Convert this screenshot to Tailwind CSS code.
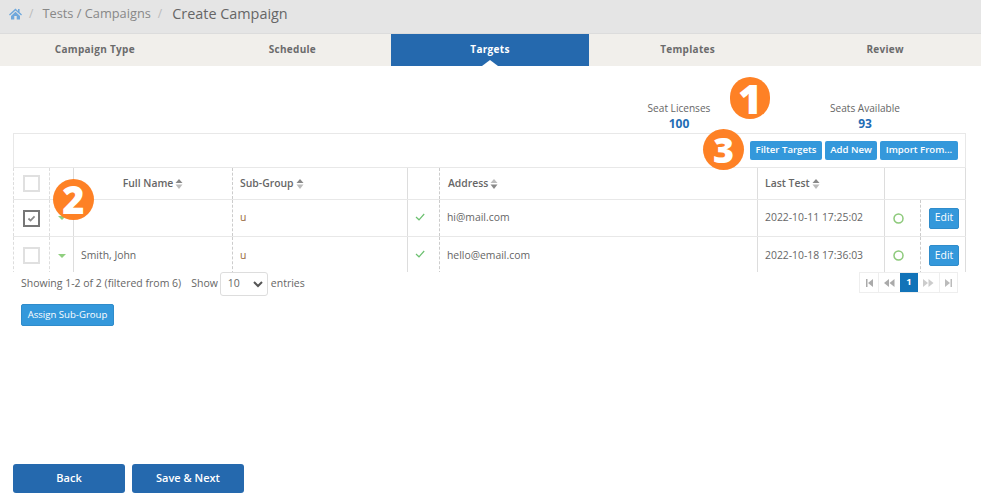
<!DOCTYPE html>
<html>
<head>
<meta charset="utf-8">
<script src="https://cdn.jsdelivr.net/npm/@tailwindcss/browser@4"></script>
</head>
<body class="bg-white">
<div class="relative w-[981px] h-[502px] overflow-hidden font-['Open_Sans',sans-serif] text-[#666]">
  <!-- breadcrumb -->
  <div class="h-[34px] bg-[#e5e5e5] border-b border-[#dcdcdc] flex items-center pl-[9px] pb-[6px]">
    <svg class="w-[13px] h-[12px]" viewBox="0 0 13 12"><path fill="#6fa8dc" d="M6.5 0.5 0 6.5l.9 1L6.500 2.500l5.600 5 .9-1-2.400-2.200V1h-1.600v1.900L6.500.5ZM2 8v3.500h3.300V8h2.400v3.500H11V8L6.500 3.800 2 8Z"/></svg>
    <span class="ml-[7px] text-[12px] text-[#bbb]">/</span>
    <span class="ml-[9px] text-[12.8px] text-[#888]">Tests / Campaigns</span>
    <span class="ml-[7px] text-[12px] text-[#bbb]">/</span>
    <span class="ml-[10px] text-[14.4px] text-[#666]">Create Campaign</span>
  </div>
  <!-- tabs -->
  <div class="grid grid-cols-5 w-[988px] -ml-[4px] h-[32px] bg-[#f1efeb] text-[10px] font-bold tracking-[0.3px] text-[#6b6b6b]">
    <div class="flex items-center justify-center pb-[1px]">Campaign Type</div>
    <div class="flex items-center justify-center pb-[1px]">Schedule</div>
    <div class="relative flex items-center justify-center pb-[1px] bg-[#2569ae] text-white">Targets
      <span class="absolute bottom-0 left-1/2 -ml-[8px] w-0 h-0 border-x-[8px] border-x-transparent border-b-[6px] border-b-white"></span>
    </div>
    <div class="flex items-center justify-center pb-[1px]">Templates</div>
    <div class="flex items-center justify-center pb-[1px]">Review</div>
  </div>
  <!-- seats -->
  <div class="h-[67px] relative flex justify-end items-end text-center">
    <div class="w-[100px] mr-[86px]">
      <div class="text-[10.1px] leading-[14px] text-[#666]">Seat Licenses</div>
      <div class="text-[12px] leading-[18px] font-bold text-[#1f6db5]">100</div>
    </div>
    <div class="w-[100px] mr-[66px]">
      <div class="text-[10.1px] leading-[14px] text-[#666]">Seats Available</div>
      <div class="text-[12px] leading-[18px] font-bold text-[#1f6db5]">93</div>
    </div>
  </div>
  <!-- table -->
  <div class="ml-[13px] w-[953px] h-[139px] overflow-hidden text-[10.4px] text-[#666]">
    <div class="h-[35px] border border-[#e8e8e8] flex items-center justify-end gap-[3px] pr-[7px]">
      <button class="w-[72px] h-[19px] rounded-[2px] bg-[#3498db] text-white text-[9.6px] font-semibold">Filter Targets</button>
      <button class="w-[52px] h-[19px] rounded-[2px] bg-[#3498db] text-white text-[9.6px] font-semibold">Add New</button>
      <button class="w-[78px] h-[19px] rounded-[2px] bg-[#3498db] text-white text-[9.6px] font-semibold">Import From...</button>
    </div>
    <!-- header -->
    <div class="grid grid-cols-[37px_24px_159px_175px_32px_318px_127px_36px_45px] h-[32px] border-b border-[#e8e8e8] font-semibold">
      <div class="border-l border-[#ddd] border-r border-r-[#ddd] border-dashed flex items-center justify-center">
        <span class="w-[17px] h-[17px] border-2 border-[#e0e0e0]"></span>
      </div>
      <div class="border-r border-[#ddd]"></div>
      <div class="border-r border-dashed border-[#ccc] flex items-center justify-center gap-[2px] pt-[1px]">Full Name
        <svg class="w-[8px] h-[10px]" viewBox="0 0 7 10"><path fill="#888" d="M3.500 0 7 4H0Z"/><path fill="#bbb" d="M3.500 10 7 5.500H0Z"/></svg>
      </div>
      <div class="border-r border-[#ddd] flex items-center pl-[7px] gap-[2px] pt-[1px]">Sub-Group
        <svg class="w-[8px] h-[10px]" viewBox="0 0 7 10"><path fill="#888" d="M3.500 0 7 4H0Z"/><path fill="#bbb" d="M3.500 10 7 5.500H0Z"/></svg>
      </div>
      <div class="border-r border-dashed border-[#ccc]"></div>
      <div class="border-r border-[#ddd] flex items-center pl-[8px] gap-[2px] pt-[1px]">Address
        <svg class="w-[8px] h-[10px]" viewBox="0 0 7 10"><path fill="#bbb" d="M3.500 0 7 4H0Z"/><path fill="#888" d="M3.500 10 7 5.500H0Z"/></svg>
      </div>
      <div class="border-r border-[#ddd] flex items-center pl-[7px] gap-[2px] pt-[1px]">Last Test
        <svg class="w-[8px] h-[10px]" viewBox="0 0 7 10"><path fill="#888" d="M3.500 0 7 4H0Z"/><path fill="#bbb" d="M3.500 10 7 5.500H0Z"/></svg>
      </div>
      <div></div>
      <div class="border-r border-[#ddd]"></div>
    </div>
    <!-- row 1 -->
    <div class="grid grid-cols-[37px_24px_159px_175px_32px_318px_127px_36px_45px] h-[37px] border-b border-[#e8e8e8]">
      <div class="border-l border-[#ddd] border-r border-r-[#ddd] border-dashed flex items-center justify-center">
        <span class="w-[17px] h-[17px] border-2 border-[#777] flex items-center justify-center">
          <svg class="w-[9px] h-[7px]" viewBox="0 0 9 8"><path fill="none" stroke="#888" stroke-width="2" d="M1 4l2.400 2.300L8 1.500"/></svg>
        </span>
      </div>
      <div class="border-r border-[#ddd] flex items-center justify-center">
        <span class="w-0 h-0 border-x-[4px] border-x-transparent border-t-[4px] border-t-[#8fcf7f]"></span>
      </div>
      <div class="border-r border-dashed border-[#ccc]"></div>
      <div class="border-r border-[#ddd] flex items-center pl-[7px] text-[#96683a]">u</div>
      <div class="border-r border-dashed border-[#ccc] flex items-center pl-[7px] pb-[3px]">
        <svg class="w-[10px] h-[8px]" viewBox="0 0 10 8"><path fill="none" stroke="#6cc070" stroke-width="1.200" d="M1 4l3 2.800L9.200 1"/></svg>
      </div>
      <div class="border-r border-[#ddd] flex items-center pl-[7px]">hi@mail.com</div>
      <div class="border-r border-[#ddd] flex items-center pl-[7px]">2022-10-11 17:25:02</div>
      <div class="border-r border-dashed border-[#ccc] flex items-center pl-[8px]">
        <svg class="w-[11px] h-[11px]" viewBox="0 0 11 11"><circle cx="5.500" cy="5.500" r="4.500" fill="none" stroke="#8cc97a" stroke-width="1.500"/></svg>
      </div>
      <div class="border-r border-[#ddd] flex items-center pl-[8px]">
        <button class="w-[30px] h-[21px] rounded-[2px] bg-[#3498db] border border-[#2f8ccb] text-white text-[10.4px]">Edit</button>
      </div>
    </div>
    <!-- row 2 -->
    <div class="grid grid-cols-[37px_24px_159px_175px_32px_318px_127px_36px_45px] h-[37px]">
      <div class="border-l border-[#ddd] border-r border-r-[#ddd] border-dashed flex items-center justify-center">
        <span class="w-[17px] h-[17px] border-2 border-[#e0e0e0]"></span>
      </div>
      <div class="border-r border-[#ddd] flex items-center justify-center">
        <span class="w-0 h-0 border-x-[4px] border-x-transparent border-t-[4px] border-t-[#8fcf7f]"></span>
      </div>
      <div class="border-r border-dashed border-[#ccc] flex items-center pl-[7px]">Smith, John</div>
      <div class="border-r border-[#ddd] flex items-center pl-[7px] text-[#96683a]">u</div>
      <div class="border-r border-dashed border-[#ccc] flex items-center pl-[7px] pb-[3px]">
        <svg class="w-[10px] h-[8px]" viewBox="0 0 10 8"><path fill="none" stroke="#6cc070" stroke-width="1.200" d="M1 4l3 2.800L9.200 1"/></svg>
      </div>
      <div class="border-r border-[#ddd] flex items-center pl-[7px]">hello@email.com</div>
      <div class="border-r border-[#ddd] flex items-center pl-[7px]">2022-10-18 17:36:03</div>
      <div class="border-r border-dashed border-[#ccc] flex items-center pl-[8px]">
        <svg class="w-[11px] h-[11px]" viewBox="0 0 11 11"><circle cx="5.500" cy="5.500" r="4.500" fill="none" stroke="#8cc97a" stroke-width="1.500"/></svg>
      </div>
      <div class="border-r border-[#ddd] flex items-center pl-[8px]">
        <button class="w-[30px] h-[21px] rounded-[2px] bg-[#3498db] border border-[#2f8ccb] text-white text-[10.4px]">Edit</button>
      </div>
    </div>
  </div>
  <!-- footer of table -->
  <div class="ml-[21px] w-[937px] h-[25px] flex items-start justify-between text-[10.5px] text-[#666]">
    <div class="flex items-center h-[24px]">
      <span>Showing 1-2 of 2 (filtered from 6)</span>
      <span class="ml-[10px]">Show</span>
      <span class="ml-[2px] w-[48px] h-[24px] border border-[#ddd] rounded-[3px] flex items-center justify-between pl-[7px] pr-[4px] text-[10.5px]">10
        <svg class="w-[10px] h-[7px]" viewBox="0 0 10 7"><path fill="none" stroke="#555" stroke-width="2" d="M1 1l4 4 4-4"/></svg>
      </span>
      <span class="ml-[3px]">entries</span>
    </div>
    <div class="flex h-[21px] border border-[#eee] text-[#bbb]">
      <span class="w-[19px] border-r border-[#eee] flex items-center justify-center"><svg class="w-[7px] h-[8px]" viewBox="0 0 7 8"><path fill="#aaa" d="M0 0h1.500v8H0ZM7 0v8L2 4Z"/></svg></span>
      <span class="w-[21px] flex items-center justify-center"><svg class="w-[11px] h-[8px]" viewBox="0 0 11 8"><path fill="#aaa" d="M5 0v8L0 4ZM10.500 0v8L5.500 4Z"/></svg></span>
      <span class="w-[18px] bg-[#1273b8] text-white text-[9.500px] font-bold flex items-center justify-center">1</span>
      <span class="w-[22px] border-r border-[#eee] flex items-center justify-center"><svg class="w-[11px] h-[8px]" viewBox="0 0 11 8"><path fill="#ccc" d="M0 0v8L5 4ZM5.500 0v8L10.500 4Z"/></svg></span>
      <span class="w-[17px] flex items-center justify-center"><svg class="w-[7px] h-[8px]" viewBox="0 0 7 8"><path fill="#bbb" d="M7 0H5.500v8H7ZM0 0v8L5 4Z"/></svg></span>
    </div>
  </div>
  <button class="block ml-[21px] mt-[7px] w-[93px] h-[22px] rounded-[2px] bg-[#3498db] border border-[#2f8ccb] text-white text-[9.600px]">Assign Sub-Group</button>
  <div class="ml-[13px] mt-[138px] flex gap-[7px]">
    <button class="w-[112px] h-[29px] rounded-[3px] bg-[#2569ae] text-white text-[11px] font-semibold">Back</button>
    <button class="w-[112px] h-[29px] rounded-[3px] bg-[#2569ae] text-white text-[11px] font-semibold">Save &amp; Next</button>
  </div>
  <!-- annotation badges -->
  <div class="absolute left-[730px] top-[77px] w-[40px] h-[42px] rounded-full bg-[#fe8125] text-white text-[41px] leading-[42px] font-extrabold text-center">1</div>
  <div class="absolute left-[703px] top-[129px] w-[41px] h-[41px] rounded-full bg-[#fe8125] text-white text-[36px] leading-[41px] font-extrabold text-center">3</div>
  <div class="absolute left-[53px] top-[179px] w-[41px] h-[41px] rounded-full bg-[#fe8125] text-white text-[38px] leading-[41px] font-extrabold text-center">2</div>
</div>
</body>
</html>
